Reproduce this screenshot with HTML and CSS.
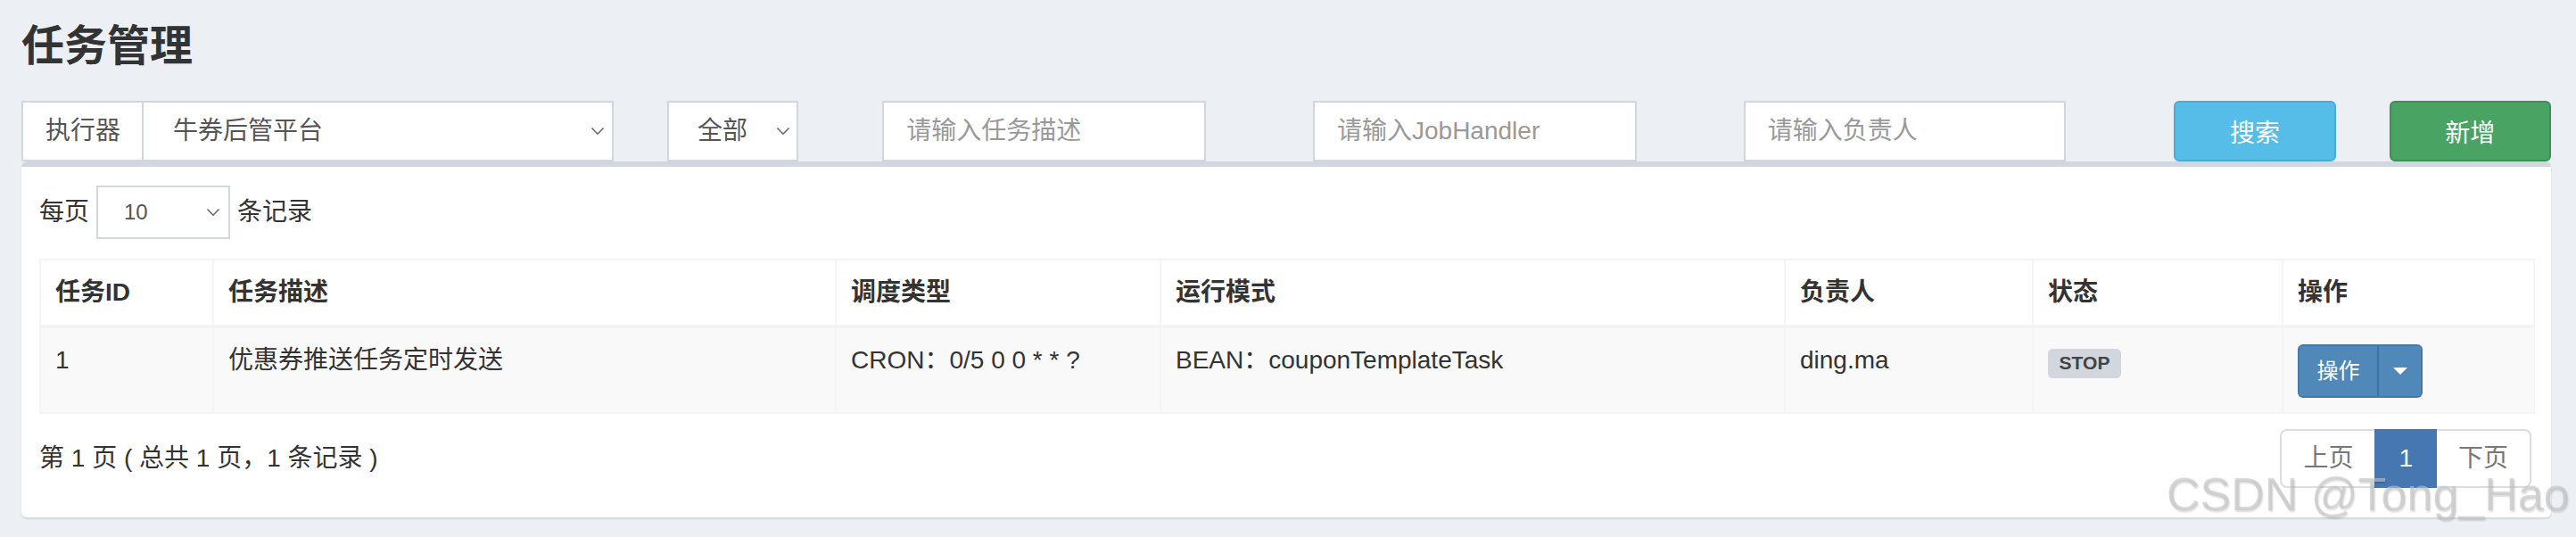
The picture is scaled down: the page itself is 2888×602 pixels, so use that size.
FILE: index.html
```html
<!DOCTYPE html>
<html lang="zh-CN">
<head>
<meta charset="utf-8">
<title>任务管理</title>
<link rel="stylesheet" href="styles.css">
</head>
<body>
<div class="page">
  <h1 class="title">任务管理</h1>

  <div class="filters">
    <div class="f-exec input-group">
      <span class="addon">执行器</span>
      <div class="select select-grow">
        <span>牛券后管平台</span>
        <svg class="chev" width="16" height="10" viewBox="0 0 16 10"><path d="M1.5 1.5 L8 8.2 L14.5 1.5" fill="none" stroke="#666" stroke-width="1.6"/></svg>
      </div>
    </div>
    <div class="f-status">
      <div class="select select-status">
        <span>全部</span>
        <svg class="chev" width="16" height="10" viewBox="0 0 16 10"><path d="M1.5 1.5 L8 8.2 L14.5 1.5" fill="none" stroke="#666" stroke-width="1.6"/></svg>
      </div>
    </div>
    <div class="f-text"><input class="form-control" type="text" placeholder="请输入任务描述"></div>
    <div class="f-text"><input class="form-control" type="text" placeholder="请输入JobHandler"></div>
    <div class="f-text"><input class="form-control narrow" type="text" placeholder="请输入负责人"></div>
    <div class="f-btn"><button class="btn btn-info" type="button">搜索</button></div>
    <div class="f-btn"><button class="btn btn-success" type="button">新增</button></div>
  </div>

  <div class="box">
    <div class="box-body">
      <div class="length">
        <span>每页</span>
        <div class="select select-sm">
          <span>10</span>
          <svg class="chev" width="16" height="10" viewBox="0 0 16 10"><path d="M1.5 1.5 L8 8.2 L14.5 1.5" fill="none" stroke="#666" stroke-width="1.6"/></svg>
        </div>
        <span>条记录</span>
      </div>

      <table class="grid">
        <colgroup>
          <col class="c-id"><col class="c-desc"><col class="c-type"><col class="c-mode"><col class="c-author"><col class="c-status"><col class="c-op">
        </colgroup>
        <thead>
          <tr>
            <th>任务ID</th>
            <th>任务描述</th>
            <th>调度类型</th>
            <th>运行模式</th>
            <th>负责人</th>
            <th>状态</th>
            <th>操作</th>
          </tr>
        </thead>
        <tbody>
          <tr>
            <td>1</td>
            <td>优惠券推送任务定时发送</td>
            <td>CRON：0/5 0 0 * * ?</td>
            <td>BEAN：couponTemplateTask</td>
            <td>ding.ma</td>
            <td><span class="label">STOP</span></td>
            <td>
              <div class="btn-group">
                <span class="op-main">操作</span>
                <span class="op-caret"><span class="caret"></span></span>
              </div>
            </td>
          </tr>
        </tbody>
      </table>

      <div class="footer">
        <div class="info">第 1 页 ( 总共 1 页，1 条记录 )</div>
        <ul class="pagination">
          <li><span class="pg pg-first">上页</span></li>
          <li><span class="pg pg-active">1</span></li>
          <li><span class="pg pg-last">下页</span></li>
        </ul>
      </div>
    </div>
  </div>

  <div class="watermark">CSDN @Tong_Hao</div>
</div>
</body>
</html>
```

FILE: styles.css
```css
html, body {
  margin: 0;
  padding: 0;
}

body {
  background: #ecf0f5;
  font-family: "Liberation Sans", "Noto Sans CJK SC", sans-serif;
  font-size: 28px;
  line-height: 40px;
  color: #333;
}

.page {
  position: relative;
  width: 2888px;
  height: 602px;
  overflow: hidden;
}

.title {
  margin: 0;
  padding: 24px 24px 0;
  font-size: 48px;
  line-height: 56px;
  font-weight: 600;
  color: #333;
}

.filters {
  display: grid;
  grid-template-columns: repeat(12, 1fr);
  column-gap: 60px;
  margin: 33px 28px 0 24px;
  height: 68px;
}

.f-exec { grid-column: span 3; }
.f-status { grid-column: span 1; }
.f-text { grid-column: span 2; }
.f-btn { grid-column: span 1; }

.input-group {
  display: flex;
  box-sizing: border-box;
  height: 68px;
  border: 2px solid #d2d6de;
  background: #fff;
}

.addon {
  display: flex;
  align-items: center;
  padding: 0 24px 0 25px;
  border-right: 2px solid #d2d6de;
  color: #555;
  font-size: 28px;
}

.select {
  display: flex;
  align-items: center;
  justify-content: space-between;
  box-sizing: border-box;
  background: #fff;
  color: #555;
  font-size: 28px;
}

.select-grow {
  flex: 1;
  padding: 0 8px 0 33px;
}

.select-status {
  width: 147px;
  height: 68px;
  border: 2px solid #d2d6de;
  padding: 0 7px 0 32px;
}

.select-sm {
  width: 150px;
  height: 60px;
  border: 2px solid #d2d6de;
  padding: 0 9px 0 29px;
  font-size: 24px;
}

.chev {
  display: block;
  flex: none;
}

.form-control {
  box-sizing: border-box;
  width: 363px;
  height: 68px;
  margin: 0;
  padding: 0 25px;
  border: 2px solid #d2d6de;
  border-radius: 0;
  background: #fff;
  font-family: inherit;
  font-size: 28px;
  color: #555;
  outline: none;
}

.form-control.narrow {
  width: 361px;
}

.form-control::placeholder {
  color: #999;
}

.btn {
  display: block;
  box-sizing: border-box;
  width: 100%;
  height: 68px;
  margin: 0;
  border: 2px solid transparent;
  border-radius: 6px;
  font-family: inherit;
  font-size: 28px;
  color: #fff;
  cursor: pointer;
}

.btn-info {
  background: #56bde9;
  border-color: #4aabd9;
}

.btn-success {
  background: #49a363;
  border-color: #3f8e55;
}

.box {
  margin: 0 28px 0 24px;
  background: #fff;
  border-top: 6px solid #d2d6de;
  border-radius: 6px;
  box-shadow: 0 2px 2px rgba(0, 0, 0, 0.1);
}

.box-body {
  padding: 20px 20px 18px 20px;
}

.length {
  display: flex;
  align-items: center;
  gap: 8px;
  height: 60px;
  margin-top: 1px;
  color: #333;
}

.grid {
  width: 100%;
  margin-top: 22px;
  border-collapse: collapse;
  table-layout: fixed;
  border: 2px solid #f4f4f4;
}

.c-id { width: 194px; }
.c-desc { width: 698px; }
.c-type { width: 364px; }
.c-mode { width: 700px; }
.c-author { width: 278px; }
.c-status { width: 280px; }
.c-op { width: 282px; }

.grid th,
.grid td {
  padding: 16px;
  border: 2px solid #f4f4f4;
  text-align: left;
  vertical-align: top;
  line-height: 40px;
}

.grid th {
  font-weight: 700;
  vertical-align: bottom;
  border-bottom-width: 4px;
  background: #fff;
}

.grid tbody tr {
  background: #f9f9f9;
}

.label {
  display: inline;
  padding: 0.2em 0.6em 0.3em;
  font-size: 21px;
  font-weight: 700;
  line-height: 1;
  color: #444;
  background: #d2d6de;
  border-radius: 0.25em;
  vertical-align: -1px;
}

.btn-group {
  display: inline-flex;
  margin-top: 2px;
  vertical-align: top;
}

.op-main,
.op-caret {
  display: flex;
  align-items: center;
  box-sizing: border-box;
  height: 60px;
  background: #5089b9;
  border: 2px solid #4679a8;
  color: #fff;
  font-size: 24px;
  line-height: 36px;
}

.op-main {
  width: 91px;
  justify-content: center;
  border-radius: 6px 0 0 6px;
}

.op-caret {
  width: 51px;
  justify-content: center;
  border-left: 2px solid #41729f;
  margin-left: -2px;
  border-radius: 0 6px 6px 0;
}

.caret {
  display: block;
  width: 0;
  height: 0;
  border-top: 8px solid #fff;
  border-left: 8px solid transparent;
  border-right: 8px solid transparent;
}

.footer {
  display: flex;
  justify-content: space-between;
  align-items: center;
  padding: 17px 0 15px;
}

.info {
  color: #333;
  font-size: 28px;
}

.pagination {
  display: flex;
  margin: 0 2px 0 0;
  padding: 0;
  list-style: none;
}

.pg {
  display: block;
  padding: 12px 24px;
  margin-left: -2px;
  border: 2px solid #ddd;
  background: #fff;
  color: #777;
  line-height: 38px;
  font-size: 28px;
}

.pg-first {
  margin-left: 0;
  border-radius: 8px 0 0 8px;
}

.pg-last {
  border-radius: 0 8px 8px 0;
}

.pg-active {
  position: relative;
  background: #4677b0;
  border-color: #4677b0;
  color: #fff;
  padding-left: 25px;
  padding-right: 25px;
}

.watermark {
  position: absolute;
  left: 2429px;
  top: 528px;
  font-family: "Liberation Sans", sans-serif;
  font-size: 52px;
  line-height: 52px;
  white-space: nowrap;
  color: rgba(196, 196, 196, 0.62);
  text-shadow: 1px 2px 2px rgba(0, 0, 0, 0.14);
}
```
